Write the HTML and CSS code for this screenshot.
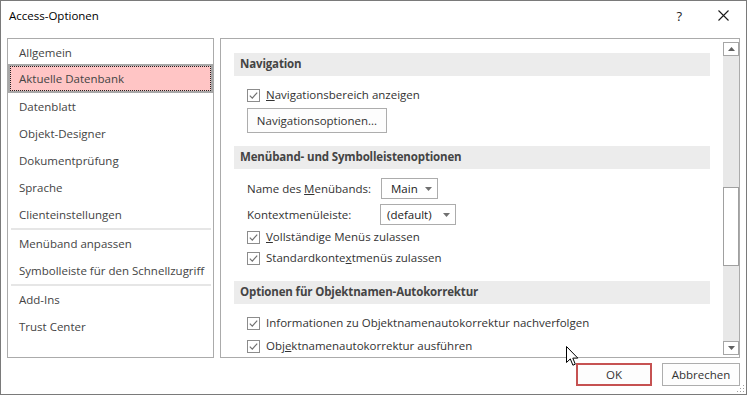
FILE: index.html
```html
<!DOCTYPE html>
<html lang="de">
<head>
<meta charset="utf-8">
<title>Access-Optionen</title>
<link rel="stylesheet" href="styles.css">
</head>
<body>
<div class="dialog">
  <div class="titlebar">
    <span class="title">Access-Optionen</span>
    <span class="help">?</span>
    <svg class="close" width="11" height="11" viewBox="0 0 11 11"><path d="M0.5 0.5 L10.5 10.5 M10.5 0.5 L0.5 10.5" stroke="#1a1a1a" stroke-width="1.1" fill="none"/></svg>
  </div>
  <div class="main">
    <div class="nav">
      <div class="item">Allgemein</div>
      <div class="item sel">Aktuelle Datenbank</div>
      <div class="item">Datenblatt</div>
      <div class="item">Objekt-Designer</div>
      <div class="item">Dokumentprüfung</div>
      <div class="item">Sprache</div>
      <div class="item">Clienteinstellungen</div>
      <div class="sep"></div>
      <div class="item">Menüband anpassen</div>
      <div class="item">Symbolleiste für den Schnellzugriff</div>
      <div class="sep"></div>
      <div class="item">Add-Ins</div>
      <div class="item">Trust Center</div>
    </div>
    <div class="content">
      <div class="scrollarea">
        <div class="sec">Navigation</div>
        <div class="row cbrow r1">
          <svg class="cb" width="13" height="13" viewBox="0 0 13 13"><rect x="0.5" y="0.5" width="12" height="12" fill="#fff" stroke="#8c8c8c"/><path d="M2.8 6.6 L5.3 9.1 L10.2 3.6" fill="none" stroke="#707070" stroke-width="1.2"/></svg>
          <span class="lbl"><u>N</u>avigationsbereich anzeigen</span>
        </div>
        <button class="pbtn">Navigationsoptionen...</button>

        <div class="sec s2">Menüband- und Symbolleistenoptionen</div>
        <div class="row ddrow d1">
          <span class="ddlbl">Name des <u>M</u>enübands:</span>
          <div class="dd dd-main"><span>Main</span><svg width="7" height="4" viewBox="0 0 7 4"><path d="M0 0 L7 0 L3.5 4 Z" fill="#707070"/></svg></div>
        </div>
        <div class="row ddrow d2">
          <span class="ddlbl">Kontextmenüleiste:</span>
          <div class="dd dd-def"><span>(default)</span><svg width="7" height="4" viewBox="0 0 7 4"><path d="M0 0 L7 0 L3.5 4 Z" fill="#707070"/></svg></div>
        </div>
        <div class="row cbrow c1">
          <svg class="cb" width="13" height="13" viewBox="0 0 13 13"><rect x="0.5" y="0.5" width="12" height="12" fill="#fff" stroke="#8c8c8c"/><path d="M2.8 6.6 L5.3 9.1 L10.2 3.6" fill="none" stroke="#707070" stroke-width="1.2"/></svg>
          <span class="lbl"><u>V</u>ollständige Menüs zulassen</span>
        </div>
        <div class="row cbrow c2">
          <svg class="cb" width="13" height="13" viewBox="0 0 13 13"><rect x="0.5" y="0.5" width="12" height="12" fill="#fff" stroke="#8c8c8c"/><path d="M2.8 6.6 L5.3 9.1 L10.2 3.6" fill="none" stroke="#707070" stroke-width="1.2"/></svg>
          <span class="lbl">Standardkonte<u>x</u>tmenüs zulassen</span>
        </div>

        <div class="sec s3">Optionen für Objektnamen-Autokorrektur</div>
        <div class="row cbrow c3">
          <svg class="cb" width="13" height="13" viewBox="0 0 13 13"><rect x="0.5" y="0.5" width="12" height="12" fill="#fff" stroke="#8c8c8c"/><path d="M2.8 6.6 L5.3 9.1 L10.2 3.6" fill="none" stroke="#707070" stroke-width="1.2"/></svg>
          <span class="lbl">Informationen zu Objektnamenautokorrektur nachverfolgen</span>
        </div>
        <div class="row cbrow c4">
          <svg class="cb" width="13" height="13" viewBox="0 0 13 13"><rect x="0.5" y="0.5" width="12" height="12" fill="#fff" stroke="#8c8c8c"/><path d="M2.8 6.6 L5.3 9.1 L10.2 3.6" fill="none" stroke="#707070" stroke-width="1.2"/></svg>
          <span class="lbl">Obj<u>e</u>ktnamenautokorrektur ausführen</span>
        </div>
      </div>
      <div class="scrollbar">
        <div class="sbbtn"><svg width="7" height="4" viewBox="0 0 7 4"><path d="M0 4 L7 4 L3.5 0 Z" fill="#606060"/></svg></div>
        <div class="track"><div class="thumb"></div></div>
        <div class="sbbtn"><svg width="7" height="4" viewBox="0 0 7 4"><path d="M0 0 L7 0 L3.5 4 Z" fill="#606060"/></svg></div>
      </div>
    </div>
  </div>
  <div class="footer">
    <button class="btn ok">OK</button>
    <button class="btn cancel">Abbrechen</button>
  </div>
  <svg class="grip" width="8" height="8" viewBox="0 0 8 8"><g fill="#a0a0a0"><rect x="6" y="0" width="1" height="1"/><rect x="3" y="3" width="1" height="1"/><rect x="6" y="3" width="1" height="1"/><rect x="0" y="6" width="1" height="1"/><rect x="3" y="6" width="1" height="1"/><rect x="6" y="6" width="1" height="1"/></g></svg>
  <svg class="cursor" width="13" height="21" viewBox="0 0 13 21"><path d="M0.5 0.5 L0.5 16.5 L4.3 12.9 L6.9 19.2 L9.3 18.2 L6.8 12.1 L11.8 12.1 Z" fill="#fff" stroke="#000" stroke-width="1" stroke-linejoin="miter"/></svg>
</div>
</body>
</html>
```

FILE: styles.css
```css
html, body {
  margin: 0;
  padding: 0;
  background: #fff;
}

body {
  font-family: "Open Sans", "Noto Sans", sans-serif;
  font-size: 11.5px;
  color: #333;
}

.dialog {
  position: relative;
  width: 747px;
  height: 395px;
  box-sizing: border-box;
  border: 1px solid #7a7a7a;
  background: #fff;
  display: flex;
  flex-direction: column;
  overflow: hidden;
}

.titlebar {
  height: 37px;
  box-sizing: border-box;
  display: flex;
  align-items: flex-start;
  padding: 0 17px 0 8px;
}

.title {
  color: #000;
  line-height: 16px;
  padding-top: 7px;
  font-size: 11.5px;
}

.help {
  margin-left: auto;
  color: #222;
  font-size: 13px;
  line-height: 16px;
  padding-top: 7px;
}

.close {
  margin-left: 36px;
  margin-top: 9px;
}

.main {
  height: 320px;
  display: flex;
  gap: 6px;
  padding: 0 6px;
}

.nav {
  width: 207px;
  box-sizing: border-box;
  border: 1px solid #ababab;
  display: flex;
  flex-direction: column;
}

.item {
  height: 27px;
  box-sizing: border-box;
  border: 2px solid transparent;
  padding-left: 9px;
  line-height: 23px;
  color: #444;
  white-space: nowrap;
  flex: none;
}

.item.sel {
  position: relative;
  height: 29px;
  margin-top: -2px;
  line-height: 25px;
  background: #ffc5c5;
  border-color: #a8a8a8;
}

.item.sel::before {
  content: "";
  position: absolute;
  inset: 0;
  border: 1px dotted #222;
}

.sep {
  height: 2px;
  margin: 0 2px 0 3px;
  background: #e6e6e6;
  flex: none;
}

.content {
  width: 520px;
  box-sizing: border-box;
  border: 1px solid #ababab;
  display: flex;
}

.scrollarea {
  flex: 1;
  padding: 14px 13px 0;
  display: flex;
  flex-direction: column;
  align-items: flex-start;
}

.sec {
  align-self: stretch;
  height: 23px;
  line-height: 22px;
  background: #ececec;
  color: #444;
  font-weight: 700;
  letter-spacing: -0.15px;
  padding-left: 6px;
  flex: none;
}

.s2 { margin-top: 13px; }
.s3 { margin-top: 14px; }

.row {
  display: flex;
  align-items: center;
  padding-left: 13px;
  flex: none;
}

.cbrow { height: 18px; }
.r1 { height: 20px; margin-top: 9px; }
.c1 { margin-top: 3px; }
.c2 { margin-top: 3px; }
.c3 { margin-top: 10px; }
.c4 { margin-top: 5px; }

.cb { flex: none; }

.lbl {
  margin-left: 6px;
  padding-bottom: 2px;
  color: #333;
  white-space: nowrap;
}

.pbtn {
  margin: 3px 0 0 13px;
  width: 140px;
  height: 25px;
  box-sizing: border-box;
  border: 1px solid #adadad;
  background: #fdfdfd;
  font: inherit;
  color: #333;
  padding: 0 0 1px;
}

.ddrow { height: 21px; }
.d1 { margin-top: 9px; }
.d2 { margin-top: 5px; }

.ddlbl {
  width: 133px;
  color: #333;
  white-space: nowrap;
  padding-bottom: 1px;
}

.dd {
  height: 21px;
  box-sizing: border-box;
  border: 1px solid #acacac;
  background: #fff;
  display: flex;
  align-items: center;
  justify-content: space-between;
  color: #222;
  padding-right: 5px;
}

.dd span {
  padding-bottom: 1px;
}

.dd-main {
  width: 57px;
  margin-left: 1px;
  padding-left: 9px;
  padding-right: 5px;
}

.dd-def {
  width: 76px;
  padding-left: 6px;
}

.scrollbar {
  width: 16px;
  box-sizing: border-box;
  padding: 3px 0 2px;
  display: flex;
  flex-direction: column;
}

.sbbtn {
  height: 14px;
  box-sizing: border-box;
  border: 1px solid #a6a6a6;
  background: #fff;
  display: flex;
  align-items: center;
  justify-content: center;
  flex: none;
}

.track {
  flex: 1;
  background: #e8e8e8;
  display: flex;
  flex-direction: column;
}

.thumb {
  margin-top: 131px;
  height: 79px;
  box-sizing: border-box;
  border: 1px solid #a0a0a0;
  background: #fff;
}

.footer {
  flex: 1;
  display: flex;
  justify-content: flex-end;
  align-items: flex-start;
  gap: 10px;
  padding: 5px 6px 0 0;
}

.btn {
  height: 23px;
  box-sizing: border-box;
  font: inherit;
  color: #333;
  background: #fdfdfd;
  border: 1px solid #adadad;
  padding: 0 0 1px;
}

.ok {
  width: 76px;
  border: 2px solid #c65252;
}

.cancel {
  width: 78px;
}

.grip {
  position: absolute;
  right: 1px;
  bottom: 1px;
}

.cursor {
  position: absolute;
  left: 565px;
  top: 345px;
}
```
